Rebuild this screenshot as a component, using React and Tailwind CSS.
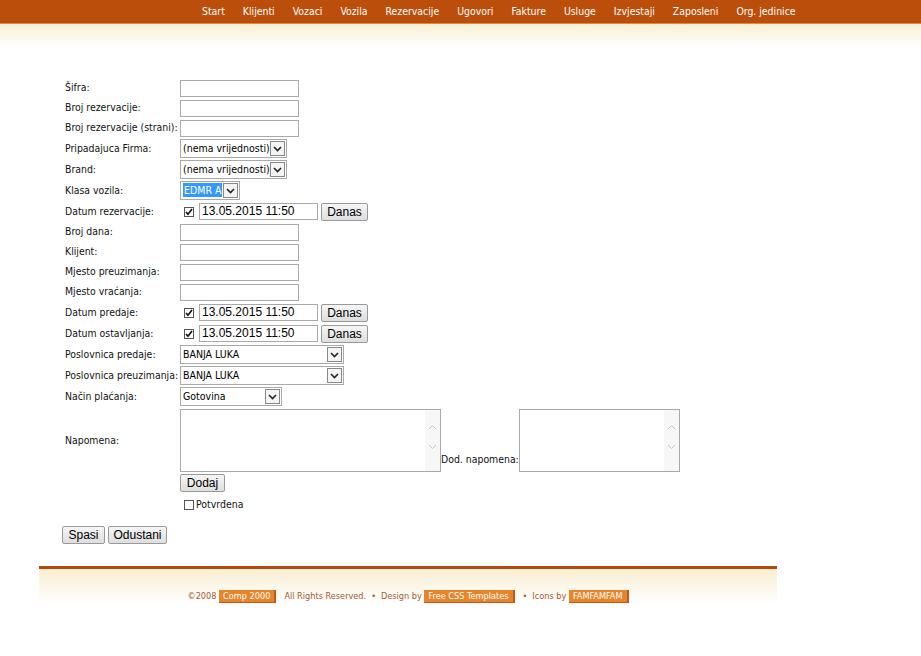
import React from 'react'

const navItems = ['Start', 'Klijenti', 'Vozaci', 'Vozila', 'Rezervacije', 'Ugovori', 'Fakture', 'Usluge', 'Izvjestaji', 'Zaposleni', 'Org. jedinice']

const labelFont = { fontFamily: '"DejaVu Sans Condensed", "DejaVu Sans", sans-serif' }

function Chevron() {
  return (
    <svg width="9" height="6" viewBox="0 0 9 6">
      <path d="M1 1 L4.5 4.5 L8 1" fill="none" stroke="#222" strokeWidth="1.6" />
    </svg>
  )
}

function TextBox({ w = 'w-[119px]', value = '' }) {
  return (
    <div className={`${w} h-[17px] border border-[#a9a9a9] bg-white text-[12px] leading-[15px] px-[2px] font-['Liberation_Sans',sans-serif] text-black whitespace-nowrap`}>
      {value}
    </div>
  )
}

function Select({ w, value, selected }) {
  return (
    <div className={`${w} h-[19px] border border-[#a9a9a9] bg-white flex items-center pl-[2px] pr-[1px] text-[10.5px] text-black whitespace-nowrap`} style={labelFont}>
      <span className="flex-1 leading-[15px] overflow-hidden">
        <span className={selected ? 'bg-[#3399ff] text-white px-[1px] py-[1px]' : ''}>{value}</span>
      </span>
      <span className="w-[15px] h-[15px] shrink-0 border border-[#888] bg-[#f4f4f4] flex items-center justify-center">
        <Chevron />
      </span>
    </div>
  )
}

function Check({ checked }) {
  return (
    <span className="w-[10px] h-[10px] border border-[#555] bg-white flex items-center justify-center">
      {checked && (
        <svg width="8" height="8" viewBox="0 0 8 8">
          <path d="M1 4 L3 6.3 L7 1" fill="none" stroke="#111" strokeWidth="1.6" />
        </svg>
      )}
    </span>
  )
}

function Btn({ children, className = '' }) {
  return (
    <div className={`h-[18px] border border-[#999] rounded-[2px] bg-gradient-to-b from-[#f6f6f6] to-[#dedede] flex items-center justify-center text-[12px] text-black font-['Liberation_Sans',sans-serif] ${className}`}>
      {children}
    </div>
  )
}

function DateField() {
  return (
    <div className="flex items-center">
      <span className="ml-[4px] mr-[5px]"><Check checked /></span>
      <TextBox value="13.05.2015 11:50" />
      <Btn className="ml-[3px] w-[47px]">Danas</Btn>
    </div>
  )
}

function TextArea({ w }) {
  return (
    <div className={`${w} h-[63px] border border-[#a9a9a9] bg-white flex justify-end`}>
      <div className="w-[15px] bg-[#f7f7f7] flex flex-col items-center pt-[14px] gap-[14px]">
        <svg width="9" height="6" viewBox="0 0 9 6"><path d="M1 5 L4.5 1.5 L8 5" fill="none" stroke="#c4c4c4" strokeWidth="1" /></svg>
        <svg width="9" height="6" viewBox="0 0 9 6"><path d="M1 1 L4.5 4.5 L8 1" fill="none" stroke="#c4c4c4" strokeWidth="1" /></svg>
      </div>
    </div>
  )
}

function Row({ label, h = 'h-[20px]', children }) {
  return (
    <div className={`flex items-center ${h}`}>
      <div className="w-[115px] shrink-0 text-[10.4px] text-[#111] whitespace-nowrap" style={labelFont}>{label}</div>
      {children}
    </div>
  )
}

function Badge({ children }) {
  return (
    <span className="inline-block bg-[#e8852b] text-white px-[4px] leading-[12px] border-r-2 border-b border-[#c0581a]">{children}</span>
  )
}

export default function App() {
  return (
    <div className="min-h-screen bg-white w-[921px]">
      {/* Header */}
      <div className="h-[23px] bg-[#bb4e0b] flex items-center pl-[202px] gap-[18px] text-[10.4px] text-white" style={labelFont}>
        {navItems.map(n => <span key={n}>{n}</span>)}
      </div>
      <div className="h-[25px] bg-gradient-to-b from-[#f9efd4] to-white border-t border-[#d98a43]" />

      {/* Form */}
      <div className="pt-[30px] pl-[65px]">
        <Row label="Šifra:"><TextBox /></Row>
        <Row label="Broj rezervacije:"><TextBox /></Row>
        <Row label="Broj rezervacije (strani):"><TextBox /></Row>
        <Row label="Pripadajuca Firma:" h="h-[21px]"><Select w="w-[107px]" value="(nema vrijednosti)" /></Row>
        <Row label="Brand:" h="h-[21px]"><Select w="w-[107px]" value="(nema vrijednosti)" /></Row>
        <Row label="Klasa vozila:" h="h-[21px]"><Select w="w-[60px]" value="EDMR A" selected /></Row>
        <Row label="Datum rezervacije:" h="h-[21px]"><DateField /></Row>
        <Row label="Broj dana:"><TextBox /></Row>
        <Row label="Klijent:"><TextBox /></Row>
        <Row label="Mjesto preuzimanja:"><TextBox /></Row>
        <Row label="Mjesto vraćanja:"><TextBox /></Row>
        <Row label="Datum predaje:" h="h-[21px]"><DateField /></Row>
        <Row label="Datum ostavljanja:" h="h-[21px]"><DateField /></Row>
        <Row label="Poslovnica predaje:" h="h-[21px]"><Select w="w-[164px]" value="BANJA LUKA" /></Row>
        <Row label="Poslovnica preuzimanja:" h="h-[21px]"><Select w="w-[164px]" value="BANJA LUKA" /></Row>
        <Row label="Način plaćanja:" h="h-[21px]"><Select w="w-[102px]" value="Gotovina" /></Row>

        <div className="flex items-center mt-[2px]">
          <div className="w-[115px] shrink-0 text-[10.4px] text-[#111]" style={labelFont}>Napomena:</div>
          <div className="flex items-end">
            <TextArea w="w-[261px]" />
            <span className="text-[10.4px] text-[#111] mb-[4px] whitespace-nowrap" style={labelFont}>Dod. napomena:</span>
            <TextArea w="w-[161px]" />
          </div>
        </div>
        <div className="pl-[115px] mt-[2px]">
          <Btn className="w-[45px]">Dodaj</Btn>
          <div className="flex items-center mt-[5px] ml-[4px] gap-[2px] text-[10.4px] text-[#111]" style={labelFont}>
            <Check />
            <span>Potvrđena</span>
          </div>
        </div>
        <div className="flex gap-[3px] mt-[13px] -ml-[3px]">
          <Btn className="w-[43px]">Spasi</Btn>
          <Btn className="w-[59px]">Odustani</Btn>
        </div>
      </div>

      {/* Footer */}
      <div className="ml-[39px] w-[738px] mt-[22px]">
        <div className="h-[3px] bg-[#b04a0d]" />
        <div className="h-[35px] bg-gradient-to-b from-[#f8eed2] to-white flex items-end justify-center gap-[5px] text-[9.1px] text-[#a25a32]" style={labelFont}>
          <span>©2008 <Badge>Comp 2000</Badge></span>
          <span className="ml-[3px]">All Rights Reserved.</span>
          <span>•</span>
          <span>Design by <Badge>Free CSS Templates</Badge></span>
          <span className="ml-[3px]">•</span>
          <span>Icons by <Badge>FAMFAMFAM</Badge></span>
        </div>
      </div>
    </div>
  )
}
